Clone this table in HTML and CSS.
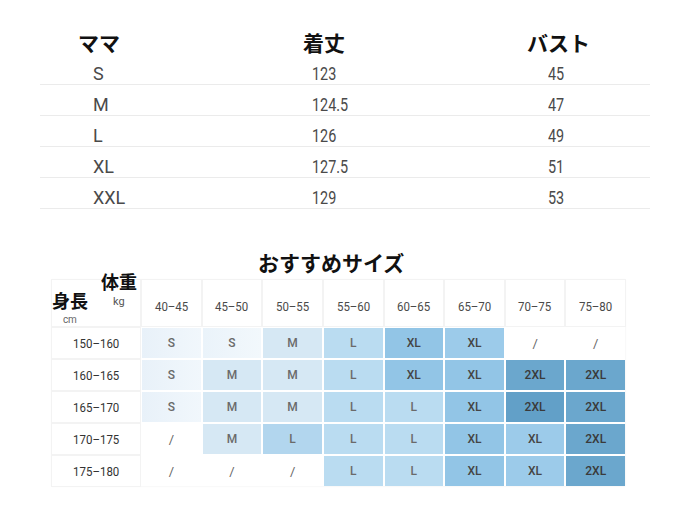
FILE: index.html
```html
<!DOCTYPE html>
<html lang="ja">
<head>
<meta charset="utf-8">
<title>サイズ表</title>
<link rel="stylesheet" href="styles.css">
</head>
<body>
<div class="page">
  <section class="spec">
    <div class="spec-row spec-head">
      <div class="c1">ママ</div><div class="c2">着丈</div><div class="c3">バスト</div>
    </div>
    <div class="spec-row">
      <div class="c1">S</div><div class="c2"><span class="num">123</span></div><div class="c3"><span class="num">45</span></div>
    </div>
    <div class="spec-row">
      <div class="c1">M</div><div class="c2"><span class="num">124.5</span></div><div class="c3"><span class="num">47</span></div>
    </div>
    <div class="spec-row">
      <div class="c1">L</div><div class="c2"><span class="num">126</span></div><div class="c3"><span class="num">49</span></div>
    </div>
    <div class="spec-row">
      <div class="c1">XL</div><div class="c2"><span class="num">127.5</span></div><div class="c3"><span class="num">51</span></div>
    </div>
    <div class="spec-row">
      <div class="c1">XXL</div><div class="c2"><span class="num">129</span></div><div class="c3"><span class="num">53</span></div>
    </div>
  </section>

  <h2 class="title">おすすめサイズ</h2>

  <div class="chart">
    <div class="corner">
      <span class="w">体重</span><span class="kg">kg</span>
      <span class="h">身長</span><span class="cm">cm</span>
    </div>
    <div class="hd"><span class="sq">40–45</span></div>
    <div class="hd"><span class="sq">45–50</span></div>
    <div class="hd"><span class="sq">50–55</span></div>
    <div class="hd"><span class="sq">55–60</span></div>
    <div class="hd"><span class="sq">60–65</span></div>
    <div class="hd"><span class="sq">65–70</span></div>
    <div class="hd"><span class="sq">70–75</span></div>
    <div class="hd"><span class="sq">75–80</span></div>

    <div class="lbl"><span class="sq">150–160</span></div>
    <div class="cell s">S</div><div class="cell s2">S</div><div class="cell m">M</div><div class="cell l">L</div>
    <div class="cell xl">XL</div><div class="cell xl2">XL</div><div class="cell no">/</div><div class="cell no">/</div>

    <div class="lbl"><span class="sq">160–165</span></div>
    <div class="cell s">S</div><div class="cell m">M</div><div class="cell m">M</div><div class="cell l">L</div>
    <div class="cell xl">XL</div><div class="cell xl">XL</div><div class="cell xxl">2XL</div><div class="cell xxl">2XL</div>

    <div class="lbl"><span class="sq">165–170</span></div>
    <div class="cell s">S</div><div class="cell m">M</div><div class="cell m">M</div><div class="cell l">L</div>
    <div class="cell l">L</div><div class="cell xl">XL</div><div class="cell xxl dk">2XL</div><div class="cell xxl">2XL</div>

    <div class="lbl"><span class="sq">170–175</span></div>
    <div class="cell no">/</div><div class="cell m">M</div><div class="cell l2">L</div><div class="cell l">L</div>
    <div class="cell l">L</div><div class="cell xl">XL</div><div class="cell xl2">XL</div><div class="cell xxl">2XL</div>

    <div class="lbl"><span class="sq">175–180</span></div>
    <div class="cell no">/</div><div class="cell no">/</div><div class="cell no">/</div><div class="cell l">L</div>
    <div class="cell l">L</div><div class="cell xl">XL</div><div class="cell xl2">XL</div><div class="cell xxl">2XL</div>
  </div>
</div>
</body>
</html>
```

FILE: styles.css
```css
html, body {
  margin: 0;
  padding: 0;
  background: #ffffff;
}

body {
  font-family: Roboto, "Noto Sans CJK JP", sans-serif;
  color: #444;
}

.page {
  width: 700px;
  height: 505px;
  overflow: hidden;
  padding-top: 20px;
  box-sizing: border-box;
}

/* ---------- spec table ---------- */
.spec {
  margin-left: 40px;
  width: 610px;
}

.spec-row {
  display: grid;
  grid-template-columns: 263px 224px 123px;
  box-sizing: border-box;
  height: 31px;
  padding-top: 11px;
  border-bottom: 1px solid #ebebeb;
  font-size: 18px;
  line-height: 18px;
  color: #4a4a4a;
}

.spec-row.spec-head {
  height: 34px;
  padding-top: 12px;
  border-bottom: none;
  font-family: "Noto Sans CJK JP", sans-serif;
  font-weight: 700;
  font-size: 21px;
  line-height: 21px;
  color: #111;
}

.spec-row .c1 { padding-left: 53px; }
.spec-row .c2 { padding-left: 9px; }
.spec-row .c3 { padding-left: 21px; }

.spec-head .c1 { padding-left: 38px; }
.spec-head .c2 { padding-left: 0; }
.spec-head .c3 { padding-left: 0; }

.num {
  display: inline-block;
  transform: scaleX(0.8);
  transform-origin: left center;
  white-space: nowrap;
}

/* ---------- title ---------- */
.title {
  margin: 43px 0 0 258px;
  font-family: "Noto Sans CJK JP", sans-serif;
  font-weight: 700;
  font-size: 21px;
  line-height: 21px;
  color: #111;
}

/* ---------- chart ---------- */
.chart {
  margin: 7px 0 0 52px;
  width: 573px;
  display: grid;
  grid-template-columns: 88px repeat(8, 1fr);
  grid-template-rows: 46px repeat(5, 30px);
  gap: 2px;
  background: #fff;
  box-shadow: 0 0 2px rgba(0, 0, 0, 0.08);
}

.corner {
  position: relative;
  background: #fff;
  box-shadow: 0 0 0 1px #f3f3f3;
}

.corner .w,
.corner .h {
  position: absolute;
  font-family: "Noto Sans CJK JP", sans-serif;
  font-weight: 700;
  font-size: 18px;
  line-height: 18px;
  color: #111;
}

.corner .w { left: 49px; top: -8px; }
.corner .h { left: 0; top: 11px; }

.corner .kg {
  position: absolute;
  left: 61px;
  top: 16px;
  font-size: 11px;
  line-height: 11px;
  color: #555;
}

.corner .cm {
  position: absolute;
  left: 11px;
  top: 35px;
  font-size: 10px;
  line-height: 10px;
  color: #666;
  letter-spacing: -0.3px;
}

.hd,
.lbl {
  display: flex;
  align-items: center;
  justify-content: center;
  background: #fff;
  box-shadow: 0 0 0 1px #f3f3f3;
  font-size: 13.5px;
}

.hd {
  padding-top: 6px;
  color: #4a4a4a;
}

.lbl {
  color: #333;
}

.sq {
  display: inline-block;
  transform: scaleX(0.85);
  white-space: nowrap;
}

.cell {
  display: flex;
  align-items: center;
  justify-content: center;
  font-size: 12px;
  font-weight: 500;
  color: #555;
}

.cell.s   { background: linear-gradient(90deg, #e8f1f9, #f1f7fc); color: #6a6a6a; }
.cell.s2  { background: linear-gradient(90deg, #eaf3fa, #f2f8fc); color: #6a6a6a; }
.cell.m   { background: #d6e8f4; color: #6a6a6a; }
.cell.l   { background: #badcf1; color: #6a6a6a; }
.cell.l2  { background: #b2d6ee; color: #6a6a6a; }
.cell.xl  { background: #92c5e6; color: #454545; }
.cell.xl2 { background: #9ccbea; color: #454545; }
.cell.xxl { background: #6ba7cd; color: #3a3a3a; }
.cell.xxl.dk { background: #62a0c8; }
.cell.no  { background: #fff; color: #666; font-weight: 400; font-size: 13px; }
```
